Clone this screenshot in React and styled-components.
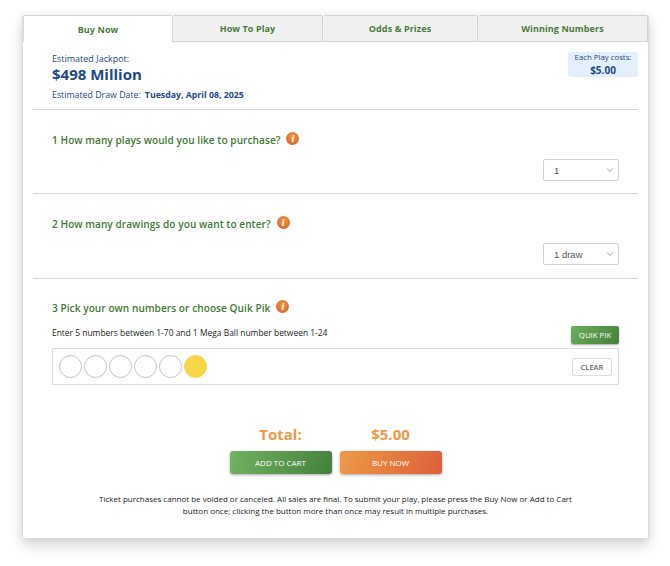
import React from "react";
import styled, { createGlobalStyle } from "styled-components";

const Global = createGlobalStyle`
  html, body { margin: 0; padding: 0; background: #fff; }
  body { font-family: "Open Sans", "Liberation Sans", sans-serif; }
  * { box-sizing: border-box; }
`;
const Page = styled.div`
  width: 670px; height: 566px; padding: 15px 22px 0; overflow: hidden;
`;
const Card = styled.div`
  width: 627px; height: 524px; background: #fff; border: 1px solid #dcdcdc; border-top: 0;
  border-radius: 2px; box-shadow: 0 7px 14px rgba(0,0,0,.15), 0 0 9px rgba(0,0,0,.07);
`;
const Tabs = styled.div`
  display: grid; grid-template-columns: 150px 150px 155px 170px; height: 27px;
`;
const Tab = styled.div`
  display: flex; align-items: center; justify-content: center;
  font-size: 9px; font-weight: 700; color: #4a7a3a; letter-spacing: .1px;
  background: ${p => p.$active ? "#fff" : "#f0f0f0"};
  border: 1px solid #d4d4d4;
  border-left: ${p => p.$first ? "1px solid #dcdcdc" : "0"};
  border-bottom: ${p => p.$active ? "0" : "1px solid #d4d4d4"};
  border-radius: 2px 2px 0 0;
`;
const Header = styled.div`
  display: flex; justify-content: space-between; align-items: flex-start;
  margin: 0 10px; height: 68px; padding: 11px 0 0 19px; border-bottom: 1px solid #d6d6d6;
`;
const JackpotLabel = styled.div`
  font-size: 9px; line-height: 12px; color: #24497f;
`;
const JackpotValue = styled.div`
  font-size: 15px; line-height: 20px; font-weight: 700; color: #1f4a86; margin-top: -1px;
`;
const DrawRow = styled.div`
  display: flex; gap: 4px; font-size: 8.8px; line-height: 12px; color: #24497f; margin-top: 5px;
  b { font-weight: 700; font-size: 8.75px; }
`;
const Cost = styled.div`
  width: 70px; height: 25px; margin-top: -1px; background: #e3effb; border-radius: 3px; color: #24497f;
  text-align: center; font-size: 7.8px; line-height: 10px;
  b { display: block; margin-top: 2px; font-size: 10px; line-height: 13px; font-weight: 700; }
`;
const Section = styled.div`
  margin: 0 10px; height: ${p => p.$h}px; padding: ${p => p.$top}px 19px 0;
  border-bottom: 1px solid ${p => p.$last ? "transparent" : "#d6d6d6"};
`;
const Title = styled.div`
  display: flex; align-items: center; gap: 6px; height: 14px;
  font-size: 10.1px; font-weight: 600; color: #3f7a36; letter-spacing: .05px;
`;
const Info = styled.span`
  display: inline-flex; width: 13px; height: 13px; margin-top: -3px; border-radius: 50%;
  background: radial-gradient(circle at 50% 35%, #f09a3e, #d5562a);
  color: #fff; font-family: "Liberation Serif", serif; font-style: italic; font-weight: 700; font-size: 10px;
  align-items: center; justify-content: center; line-height: 1;
`;
const SelectRow = styled.div`
  display: flex; justify-content: flex-end; margin-top: 12px;
`;
const Select = styled.div`
  width: 76px; height: 22px; border: 1px solid #d2d2d2; border-radius: 2px; background: #fff;
  display: flex; align-items: center; justify-content: space-between; padding: 0 4px 0 10px;
  font-family: "Liberation Sans", sans-serif; font-size: 9.5px; color: #555;
`;
const Instruction = styled.div`
  display: flex; justify-content: space-between; align-items: center; margin-top: 8px; height: 19px;
  font-size: 8.45px; color: #222;
`;
const Quik = styled.div`
  width: 48px; height: 18px; border-radius: 2px; color: #fff; font-size: 7.8px; font-weight: 500;
  display: flex; align-items: center; justify-content: center; margin-top: 4px;
  background: linear-gradient(135deg, #6fae5f, #447f3b); box-shadow: 0 1px 2px rgba(0,0,0,.35);
`;
const BallBox = styled.div`
  display: flex; align-items: center; justify-content: space-between; height: 37px; margin-top: 6px;
  border: 1px solid #dcdcdc; padding: 0 6px;
`;
const Balls = styled.div`
  display: flex; gap: 2px;
`;
const Ball = styled.div`
  width: 23px; height: 23px; border-radius: 50%;
  border: 1px solid ${p => p.$mega ? "#f7d648" : "#c4c4c4"};
  background: ${p => p.$mega ? "#f7d648" : "#fff"};
`;
const Clear = styled.div`
  width: 40px; height: 18px; border: 1px solid #dcdcdc; border-radius: 2px; color: #666;
  display: flex; align-items: center; justify-content: center; font-size: 7.5px; font-weight: 600;
`;
const Totals = styled.div`
  display: grid; grid-template-columns: 110px 110px; justify-content: center; margin-top: 25px;
  height: 20px; align-items: center; text-align: center; color: #ec9a45; font-weight: 700; font-size: 15px;
`;
const Actions = styled.div`
  display: flex; justify-content: center; gap: 8px; margin-top: 7px;
`;
const Action = styled.div`
  width: 102px; height: 23px; border-radius: 3px; color: #fff; font-size: 8px; font-weight: 500;
  display: flex; align-items: center; justify-content: center; box-shadow: 0 1px 3px rgba(0,0,0,.35);
  background: ${p => p.$orange ? "linear-gradient(110deg, #ee9a45, #dc5f3a)" : "linear-gradient(110deg, #72b264, #43803a)"};
`;
const Note = styled.div`
  margin: 19px auto 0; width: 490px; text-align: center; font-size: 8px; line-height: 12px; color: #222;
`;

const Chevron = () => (
  <svg width="8" height="6" viewBox="0 0 8 6" fill="none" stroke="#888" strokeWidth="0.8"><path d="M1 1.5 4 4.5 7 1.5" /></svg>
);

export default function App() {
  return (
    <Page>
      <Global />
      <Card>
        <Tabs>
          <Tab $active $first>Buy Now</Tab>
          <Tab>How To Play</Tab>
          <Tab>Odds &amp; Prizes</Tab>
          <Tab>Winning Numbers</Tab>
        </Tabs>
        <Header>
          <div>
            <JackpotLabel>Estimated Jackpot:</JackpotLabel>
            <JackpotValue>$498 Million</JackpotValue>
            <DrawRow><span>Estimated Draw Date:</span><b>Tuesday, April 08, 2025</b></DrawRow>
          </div>
          <Cost>Each Play costs:<b>$5.00</b></Cost>
        </Header>
        <Section $h={84} $top={23}>
          <Title>1 How many plays would you like to purchase? <Info>i</Info></Title>
          <SelectRow><Select>1<Chevron /></Select></SelectRow>
        </Section>
        <Section $h={85} $top={23}>
          <Title>2 How many drawings do you want to enter? <Info>i</Info></Title>
          <SelectRow><Select>1 draw<Chevron /></Select></SelectRow>
        </Section>
        <Section $last $h={120} $top={22}>
          <Title>3 Pick your own numbers or choose Quik Pik <Info>i</Info></Title>
          <Instruction>Enter 5 numbers between 1-70 and 1 Mega Ball number between 1-24<Quik>QUIK PIK</Quik></Instruction>
          <BallBox>
            <Balls><Ball /><Ball /><Ball /><Ball /><Ball /><Ball $mega /></Balls>
            <Clear>CLEAR</Clear>
          </BallBox>
        </Section>
        <Totals><span>Total:</span><span>$5.00</span></Totals>
        <Actions><Action>ADD TO CART</Action><Action $orange>BUY NOW</Action></Actions>
        <Note>Ticket purchases cannot be voided or canceled. All sales are final. To submit your play, please press the Buy Now or Add to Cart button once; clicking the button more than once may result in multiple purchases.</Note>
      </Card>
    </Page>
  );
}
